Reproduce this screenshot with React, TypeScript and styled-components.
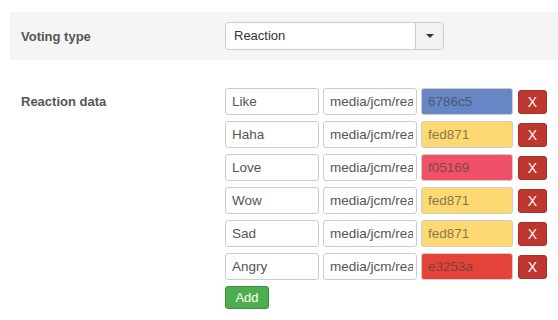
import React from 'react';
import styled, { createGlobalStyle } from 'styled-components';

const GlobalStyle = createGlobalStyle`
  html, body {
    margin: 0;
    padding: 0;
    background: #fff;
    font-family: "Liberation Sans", Arial, sans-serif;
  }
`;

const Page = styled.div`
  padding: 12px 0 0 10px;
  width: 548px;
`;

const Panel = styled.div`
  display: flex;
  align-items: center;
  height: 48px;
  background: #f5f5f5;
`;

const Field = styled.div`
  display: flex;
  align-items: flex-start;
  margin-top: 28px;
`;

const Label = styled.div`
  width: 215px;
  flex-shrink: 0;
  padding-left: 11px;
  box-sizing: border-box;
  font-size: 13px;
  font-weight: bold;
  color: #555;
  line-height: 27px;
`;

const Select = styled.div`
  display: flex;
  width: 219px;
  height: 28px;
  box-sizing: border-box;
  border: 1px solid #ccc;
  border-radius: 3px;
  background: #fff;
  overflow: hidden;
`;

const SelectValue = styled.div`
  flex: 1;
  padding-left: 8px;
  font-size: 13px;
  line-height: 26px;
  color: #333;
`;

const SelectToggle = styled.div`
  width: 27px;
  border-left: 1px solid #ccc;
  background: #f2f2f2;
  display: flex;
  align-items: center;
  justify-content: center;
`;

const Caret = styled.span`
  width: 0;
  height: 0;
  border-left: 4px solid transparent;
  border-right: 4px solid transparent;
  border-top: 4px solid #333;
`;

const Rows = styled.div`
  display: flex;
  flex-direction: column;
  gap: 6px;
`;

const Row = styled.div`
  display: flex;
  align-items: center;
  gap: 4px;
`;

const Input = styled.input<{ $bg?: string; $w?: number }>`
  width: ${p => p.$w ?? 94}px;
  height: 27px;
  box-sizing: border-box;
  border: 1px solid #ccc;
  border-radius: 3px;
  padding: 0 3px 0 6px;
  font-family: "Liberation Sans", Arial, sans-serif;
  font-size: 13.5px;
  color: ${p => (p.$bg ? 'rgba(60, 60, 60, 0.65)' : '#555')};
  background: ${p => p.$bg ?? '#fff'};
  outline: none;
`;

const RemoveButton = styled.button`
  width: 29px;
  height: 24px;
  margin-left: 1px;
  border: 1px solid #a8302a;
  border-radius: 3px;
  background: #bd362f;
  color: #fff;
  font-family: "Liberation Sans", Arial, sans-serif;
  font-size: 14px;
  padding: 0;
  cursor: pointer;
`;

const AddButton = styled.button`
  width: 44px;
  height: 23px;
  border: 1px solid #3d8b3d;
  border-radius: 3px;
  background: #4cae4c;
  color: #fff;
  font-family: "Liberation Sans", Arial, sans-serif;
  font-size: 13px;
  padding: 0;
  cursor: pointer;
`;

const reactions = [
  { name: 'Like', color: '6786c5', fill: '#6786c5' },
  { name: 'Haha', color: 'fed871', fill: '#fed871' },
  { name: 'Love', color: 'f05169', fill: '#f05169' },
  { name: 'Wow', color: 'fed871', fill: '#fed871' },
  { name: 'Sad', color: 'fed871', fill: '#fed871' },
  { name: 'Angry', color: 'e3253a', fill: '#e4433a' },
];

export default function App() {
  return (
    <Page>
      <GlobalStyle />
      <Panel>
        <Label>Voting type</Label>
        <Select>
          <SelectValue>Reaction</SelectValue>
          <SelectToggle>
            <Caret />
          </SelectToggle>
        </Select>
      </Panel>
      <Field>
        <Label>Reaction data</Label>
        <Rows>
          {reactions.map(r => (
            <Row key={r.name}>
              <Input defaultValue={r.name} />
              <Input defaultValue="media/jcm/reactions" />
              <Input defaultValue={r.color} $bg={r.fill} $w={92} />
              <RemoveButton>X</RemoveButton>
            </Row>
          ))}
          <Row>
            <AddButton>Add</AddButton>
          </Row>
        </Rows>
      </Field>
    </Page>
  );
}
